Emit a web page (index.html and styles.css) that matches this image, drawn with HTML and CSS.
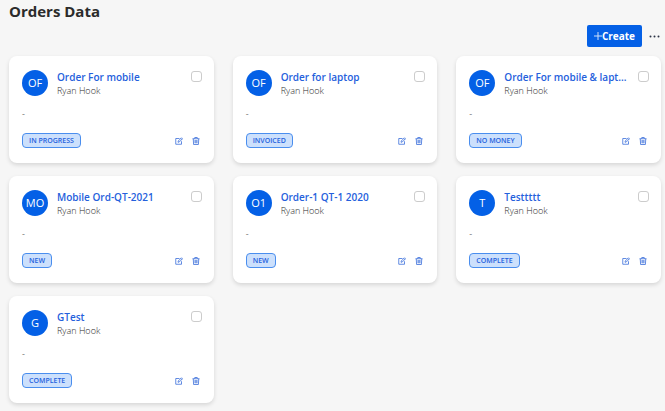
FILE: index.html
```html
<!DOCTYPE html>
<html lang="en">
<head>
    <meta charset="UTF-8">
    <meta name="viewport" content="width=device-width, initial-scale=1.0">
    <title>Orders Data</title>
    <link rel="stylesheet" href="styles.css">
</head>
<body>

    <!-- Shared icons -->
    <svg class="icon-defs" aria-hidden="true">
        <symbol id="icon-edit" viewBox="0 0 16 16">
            <path d="M9 3H1.500V14.500H13V8.500" />
            <path d="M6 10.500L6.500 8L13 1.500L15 3.500L8.500 10Z" />
            <path d="M11.500 3L13.500 5" />
        </symbol>
        <symbol id="icon-delete" viewBox="0 0 16 16">
            <path d="M1 3.500H15M5.500 3.500V1H10.500V3.500" />
            <path d="M2.500 3.500L3.200 15H12.800L13.500 3.500" />
            <path d="M6 6V12.500M8 6V12.500M10 6V12.500" />
        </symbol>
    </svg>

    <header class="page-header">
        <h1>Orders Data</h1>
        <div class="toolbar">
            <button type="button" class="create-button">
                <svg viewBox="0 0 8 8" aria-hidden="true"><path d="M4 0V8M0 4H8" /></svg>Create
            </button>
            <button type="button" class="more-button" aria-label="More actions">
                <svg viewBox="0 0 11 3" aria-hidden="true">
                    <circle cx="1.500" cy="1.500" r="1" />
                    <circle cx="5.500" cy="1.500" r="1" />
                    <circle cx="9.500" cy="1.500" r="1" />
                </svg>
            </button>
        </div>
    </header>

    <main class="orders">
        <article class="card">
            <div class="card-top">
                <span class="avatar">OF</span>
                <div class="card-info">
                    <a href="#" class="card-title">Order For mobile</a>
                    <p class="card-owner">Ryan Hook</p>
                </div>
                <input type="checkbox" aria-label="Select Order For mobile">
            </div>
            <p class="card-note">-</p>
            <div class="card-bottom">
                <span class="status">IN PROGRESS</span>
                <button type="button" class="icon-button" aria-label="Edit"><svg><use href="#icon-edit" /></svg></button>
                <button type="button" class="icon-button" aria-label="Delete"><svg><use href="#icon-delete" /></svg></button>
            </div>
        </article>

        <article class="card">
            <div class="card-top">
                <span class="avatar">OF</span>
                <div class="card-info">
                    <a href="#" class="card-title">Order for laptop</a>
                    <p class="card-owner">Ryan Hook</p>
                </div>
                <input type="checkbox" aria-label="Select Order for laptop">
            </div>
            <p class="card-note">-</p>
            <div class="card-bottom">
                <span class="status">INVOICED</span>
                <button type="button" class="icon-button" aria-label="Edit"><svg><use href="#icon-edit" /></svg></button>
                <button type="button" class="icon-button" aria-label="Delete"><svg><use href="#icon-delete" /></svg></button>
            </div>
        </article>

        <article class="card">
            <div class="card-top">
                <span class="avatar">OF</span>
                <div class="card-info">
                    <a href="#" class="card-title">Order For mobile &amp; lapt...</a>
                    <p class="card-owner">Ryan Hook</p>
                </div>
                <input type="checkbox" aria-label="Select Order For mobile &amp; lapt...">
            </div>
            <p class="card-note">-</p>
            <div class="card-bottom">
                <span class="status">NO MONEY</span>
                <button type="button" class="icon-button" aria-label="Edit"><svg><use href="#icon-edit" /></svg></button>
                <button type="button" class="icon-button" aria-label="Delete"><svg><use href="#icon-delete" /></svg></button>
            </div>
        </article>

        <article class="card">
            <div class="card-top">
                <span class="avatar">MO</span>
                <div class="card-info">
                    <a href="#" class="card-title">Mobile Ord-QT-2021</a>
                    <p class="card-owner">Ryan Hook</p>
                </div>
                <input type="checkbox" aria-label="Select Mobile Ord-QT-2021">
            </div>
            <p class="card-note">-</p>
            <div class="card-bottom">
                <span class="status">NEW</span>
                <button type="button" class="icon-button" aria-label="Edit"><svg><use href="#icon-edit" /></svg></button>
                <button type="button" class="icon-button" aria-label="Delete"><svg><use href="#icon-delete" /></svg></button>
            </div>
        </article>

        <article class="card">
            <div class="card-top">
                <span class="avatar">O1</span>
                <div class="card-info">
                    <a href="#" class="card-title">Order-1 QT-1 2020</a>
                    <p class="card-owner">Ryan Hook</p>
                </div>
                <input type="checkbox" aria-label="Select Order-1 QT-1 2020">
            </div>
            <p class="card-note">-</p>
            <div class="card-bottom">
                <span class="status">NEW</span>
                <button type="button" class="icon-button" aria-label="Edit"><svg><use href="#icon-edit" /></svg></button>
                <button type="button" class="icon-button" aria-label="Delete"><svg><use href="#icon-delete" /></svg></button>
            </div>
        </article>

        <article class="card">
            <div class="card-top">
                <span class="avatar">T</span>
                <div class="card-info">
                    <a href="#" class="card-title">Testtttt</a>
                    <p class="card-owner">Ryan Hook</p>
                </div>
                <input type="checkbox" aria-label="Select Testtttt">
            </div>
            <p class="card-note">-</p>
            <div class="card-bottom">
                <span class="status">COMPLETE</span>
                <button type="button" class="icon-button" aria-label="Edit"><svg><use href="#icon-edit" /></svg></button>
                <button type="button" class="icon-button" aria-label="Delete"><svg><use href="#icon-delete" /></svg></button>
            </div>
        </article>

        <article class="card">
            <div class="card-top">
                <span class="avatar">G</span>
                <div class="card-info">
                    <a href="#" class="card-title">GTest</a>
                    <p class="card-owner">Ryan Hook</p>
                </div>
                <input type="checkbox" aria-label="Select GTest">
            </div>
            <p class="card-note">-</p>
            <div class="card-bottom">
                <span class="status">COMPLETE</span>
                <button type="button" class="icon-button" aria-label="Edit"><svg><use href="#icon-edit" /></svg></button>
                <button type="button" class="icon-button" aria-label="Delete"><svg><use href="#icon-delete" /></svg></button>
            </div>
        </article>
    </main>

</body>
</html>
```

FILE: styles.css
```css
* {
    box-sizing: border-box;
}
body {
    font-family: "Open Sans", "Noto Sans", sans-serif;
    background-color: #f6f6f6;
    color: #2b2b2b;
    margin: 0;
    padding: 0 4px 7px 9px;
}
h1 {
    font-size: 15px;
    line-height: 22px;
    font-weight: bold;
    margin: 0;
}
p {
    margin: 0;
}
button {
    font-family: inherit;
    border: none;
    padding: 0;
    cursor: pointer;
}
.icon-defs {
    display: none;
}
.toolbar {
    display: flex;
    justify-content: flex-end;
    align-items: center;
    gap: 7px;
    margin: 3px 1px 9px 0;
}
.create-button {
    display: flex;
    align-items: center;
    height: 22px;
    padding: 0 7px;
    background: #0460e6;
    color: white;
    font-size: 10px;
    font-weight: bold;
    border-radius: 2px;
}
.create-button svg {
    width: 8px;
    height: 8px;
    fill: none;
    stroke: #cfe0fa;
}
.more-button {
    display: flex;
    align-items: center;
    height: 22px;
    background: none;
}
.more-button svg {
    width: 11px;
    height: 3px;
    fill: #2b3345;
}
.orders {
    display: grid;
    grid-template-columns: repeat(3, minmax(0, 1fr));
    gap: 13px 19px;
}
.card {
    background: white;
    padding: 14px 12px 15px 13px;
    border-radius: 8px;
    box-shadow: 0 2px 4px rgba(0, 0, 0, 0.13);
}
.card-top {
    display: flex;
    align-items: flex-start;
}
.avatar {
    flex: none;
    display: flex;
    align-items: center;
    justify-content: center;
    width: 26px;
    height: 26px;
    margin-right: 9px;
    border-radius: 50%;
    background: #0460e6;
    color: white;
    font-size: 11px;
    line-height: 14px;
}
.card-info {
    flex: 1;
    min-width: 0;
}
.card-title {
    display: block;
    font-size: 10px;
    line-height: 14px;
    font-weight: 600;
    color: #2460dc;
    text-decoration: none;
    white-space: nowrap;
    overflow: hidden;
    text-overflow: ellipsis;
}
.card-owner {
    font-size: 9px;
    line-height: 14px;
    font-weight: 300;
}
input[type="checkbox"] {
    appearance: none;
    flex: none;
    width: 11px;
    height: 11px;
    margin: 1px 0 0 8px;
    border: 1px solid #cccccc;
    border-radius: 3px;
    background: white;
}
.card-note {
    font-size: 9px;
    line-height: 12px;
    margin: 10px 0 13px;
    color: #777777;
}
.card-bottom {
    display: flex;
    align-items: center;
}
.status {
    height: 15px;
    margin-right: auto;
    padding: 0 6px;
    border: 1px solid #4a8eee;
    border-radius: 4px;
    background: #cce0fc;
    color: #2460dc;
    font-size: 7px;
    line-height: 13px;
    font-weight: 600;
}
.icon-button {
    display: flex;
    width: 8px;
    height: 8px;
    margin: 0 2px 0 7px;
    background: none;
}
.icon-button svg {
    width: 8px;
    height: 8px;
    fill: none;
    stroke: #2f66d8;
    stroke-width: 1.5px;
}
```
